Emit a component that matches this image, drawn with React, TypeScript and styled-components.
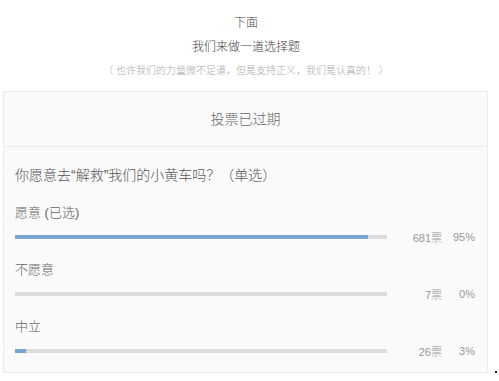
import React from 'react';
import styled, { createGlobalStyle } from 'styled-components';

const GlobalStyle = createGlobalStyle`
  html, body {
    margin: 0;
    padding: 0;
    background: #fff;
    font-family: "Liberation Sans", "Noto Sans CJK SC", sans-serif;
    font-weight: 300;
  }
`;

interface Choice {
  label: string;
  votes: number;
  percent: number;
}

const choices: Choice[] = [
  { label: '愿意 (已选)', votes: 681, percent: 95 },
  { label: '不愿意', votes: 7, percent: 0 },
  { label: '中立', votes: 26, percent: 3 },
];

const App: React.FC = () => {
  return (
    <>
      <GlobalStyle />
      <Page>
        <Intro>
          <IntroTitle>下面</IntroTitle>
          <IntroLine>我们来做一道选择题</IntroLine>
          <IntroNote>（ 也许我们的力量微不足道，但是支持正义，我们是认真的！ ）</IntroNote>
        </Intro>
        <CardRow>
          <PollCard>
            <PollHeader>投票已过期</PollHeader>
            <PollBody>
              <Question>你愿意去“解救”我们的小黄车吗？（单选）</Question>
              {choices.map((c) => (
                <Option key={c.label}>
                  <OptionLabel>{c.label}</OptionLabel>
                  <ResultRow>
                    <Track>
                      <Fill style={{ width: `${c.percent}%` }} />
                    </Track>
                    <Votes>{c.votes}票</Votes>
                    <Percent>{c.percent}%</Percent>
                  </ResultRow>
                </Option>
              ))}
            </PollBody>
          </PollCard>
          <Dot />
        </CardRow>
      </Page>
    </>
  );
};

const Page = styled.div`
  width: 499px;
  height: 381px;
  overflow: hidden;
`;

const Intro = styled.div`
  width: 492px;
  padding-top: 12px;
  text-align: center;
`;

const IntroTitle = styled.div`
  font-size: 12px;
  line-height: 22px;
  color: #444;
`;

const IntroLine = styled.div`
  margin-top: 2px;
  font-size: 12px;
  line-height: 22px;
  color: #444;
`;

const IntroNote = styled.div`
  margin-top: 2px;
  font-size: 10px;
  line-height: 22px;
  color: #aaa;
`;

const CardRow = styled.div`
  display: flex;
  align-items: flex-end;
  margin-top: 9px;
`;

const PollCard = styled.div`
  width: 485px;
  margin-left: 3px;
  box-sizing: border-box;
  border: 1px solid #ececec;
  background: #fafafa;
`;

const Dot = styled.div`
  width: 2px;
  height: 2px;
  background: #222;
  margin-left: 7px;
`;

const PollHeader = styled.div`
  height: 54px;
  line-height: 54px;
  border-bottom: 1px solid #ececec;
  text-align: center;
  font-size: 14px;
  color: #666;
`;

const PollBody = styled.div`
  padding: 18px 12px 11px 11px;
`;

const Question = styled.div`
  font-size: 14px;
  line-height: 20px;
  color: #555;
  margin-bottom: 18px;
`;

const Option = styled.div`
  margin-bottom: 13px;
  &:last-child {
    margin-bottom: 0;
  }
`;

const OptionLabel = styled.div`
  font-size: 13px;
  line-height: 20px;
  color: #666;
  margin-bottom: 4px;
`;

const ResultRow = styled.div`
  display: flex;
  align-items: center;
  height: 20px;
`;

const Track = styled.div`
  flex: 1;
  height: 4px;
  background: #dcdcdc;
`;

const Fill = styled.div`
  height: 100%;
  background: #78a6d2;
`;

const Votes = styled.div`
  width: 55px;
  text-align: right;
  font-size: 11px;
  color: #999;
`;

const Percent = styled.div`
  width: 33px;
  text-align: right;
  font-size: 11px;
  color: #999;
`;

export default App;
